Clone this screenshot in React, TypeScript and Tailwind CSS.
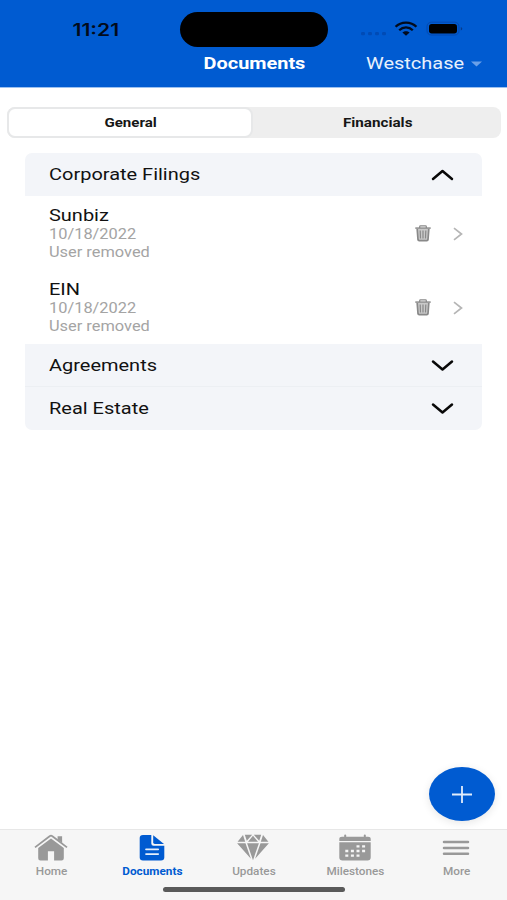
import type { ReactNode } from "react";

function Wide({ children, className = "" }: { children: ReactNode; className?: string }) {
  return <span className={`block whitespace-nowrap ${className}`}>{children}</span>;
}

function StatusBar() {
  return (
    <div className="flex h-[49px] items-start">
      <div className="flex w-[180px] justify-center pt-[18px] pl-3">
        <Wide className="scale-x-[1.24] font-[Inter,sans-serif] text-[17px] leading-[24px] font-semibold text-[#020b1c]">11:21</Wide>
      </div>
      <div className="mt-3 h-[35px] w-[148px] rounded-full bg-black" />
      <div className="flex pt-[21px] pl-8">
        <svg width="104" height="17" viewBox="0 0 104 17">
          <g fill="#004bb5">
            <rect x="1" y="11" width="4" height="3.2" rx="1.2" />
            <rect x="8" y="11" width="4" height="3.2" rx="1.2" />
            <rect x="15" y="11" width="4" height="3.2" rx="1.2" />
            <rect x="22" y="11" width="4" height="3.2" rx="1.2" />
          </g>
          <g fill="none" stroke="#020b1c" strokeWidth="2.3">
            <path d="M35.6 5.8C41 .2 51 .2 56.4 5.8" />
            <path d="M39.2 9.2c3.9-3.8 9.7-3.8 13.6 0" />
          </g>
          <path d="M42.4 11.6c2.1-1.9 5.1-1.9 7.2 0L46 14.7Z" fill="#020b1c" />
          <rect x="67" y="1.2" width="32" height="12.8" rx="4.2" fill="none" stroke="#0549ae" strokeWidth="1" />
          <rect x="69" y="3" width="28" height="9.4" rx="2.7" fill="#000" />
          <path d="M100.8 6v3.6c2-.6 2-3 0-3.6Z" fill="#063b8a" />
        </svg>
      </div>
    </div>
  );
}

function Header() {
  return (
    <header className="h-[88px] border-b border-[#9cc1f0] bg-[#005bd1]">
      <StatusBar />
      <div className="grid h-[30px] grid-cols-[180px_148px_179px] items-center text-white">
        <span />
        <div className="flex justify-center">
          <Wide className="scale-x-[1.17] text-[17px] font-bold">Documents</Wide>
        </div>
        <div className="flex items-center pl-[38px]">
          <div className="w-[105px]">
            <Wide className="origin-left scale-x-[1.175] text-[17px] text-[#e8f1fc]">Westchase</Wide>
          </div>
          <svg width="11" height="6" viewBox="0 0 11 6"><path d="M0 .5h11L5.5 5.5Z" fill="#6ba0e8" /></svg>
        </div>
      </div>
    </header>
  );
}

function SegmentedControl() {
  return (
    <div className="mx-[7px] mt-[19px] flex h-[31px] w-[494px] rounded-[8px] bg-[#eeeeee] text-[13px] font-bold text-[#161616]">
      <button className="flex w-[246px] items-center justify-center rounded-[8px] border-2 border-[#e7e8e9] bg-white">
        <Wide className="translate-x-px scale-x-[1.16]">General</Wide>
      </button>
      <button className="flex flex-1 items-center justify-center">
        <Wide className="translate-x-px scale-x-[1.17]">Financials</Wide>
      </button>
    </div>
  );
}

function SectionRow({ title, open = false, className = "" }: { title: string; open?: boolean; className?: string }) {
  return (
    <div className={`flex items-center justify-between bg-[#f3f5f9] pr-[28px] pl-6 ${className}`}>
      <Wide className="origin-left scale-x-[1.175] text-[17px] text-[#111]">{title}</Wide>
      <svg width="23" height="13" viewBox="0 0 23 13" fill="none" stroke="#080808" strokeWidth="2.5" strokeLinecap="round" strokeLinejoin="round">
        <path d={open ? "M2 11 11.5 3 21 11" : "M2 2.5 11.5 10.5 21 2.5"} />
      </svg>
    </div>
  );
}

function TrashIcon() {
  return (
    <svg width="16" height="17" viewBox="0 0 16 17" fill="none" stroke="#898989">
      <path d="M4.7 3V1.4q0-.6.8-.6h5q.8 0 .8.6V3" strokeWidth="1.2" />
      <path d="M.3 3.1h15.4" strokeWidth="1.5" />
      <path d="m2.2 4 .8 10.7q.1 1 1.2 1h7.6q1.1 0 1.2-1L13.8 4" fill="#c9c9c9" strokeWidth="1.7" />
      <path d="m5.2 5.5.3 8M8 5.5v8m2.8-8-.3 8" strokeWidth="1.2" />
    </svg>
  );
}

function FileRow({ name, date, note, className = "" }: { name: string; date: string; note: string; className?: string }) {
  return (
    <div className={`flex justify-between pr-[19px] pl-6 ${className}`}>
      <div className="pt-[10px]">
        <Wide className="origin-left scale-x-[1.175] text-[17px] leading-[19px] text-[#111]">{name}</Wide>
        <Wide className="origin-left scale-x-[1.17] text-[14px] leading-[18px] text-[#a4a4a4]">{date}</Wide>
        <Wide className="origin-left scale-x-[1.17] text-[14px] leading-[19px] text-[#a4a4a4]">{note}</Wide>
      </div>
      <div className="flex h-[75px] items-center gap-[22px]">
        <TrashIcon />
        <svg width="10" height="14" viewBox="0 0 10 14" fill="none" stroke="#b5b5b5" strokeWidth="1.7"><path d="m1 1.2 7.5 5.8L1 12.8" /></svg>
      </div>
    </div>
  );
}

function HomeIcon() {
  return (
    <svg width="34" height="27" viewBox="0 0 34 27" fill="#999">
      <path d="M23.6 2.2h4.5V9l-4.5-3.4Z" />
      <path d="M1 13.4 15.6 2.2q1.4-1 2.8 0L33 13.4" fill="none" stroke="#999" strokeWidth="1.8" />
      <path d="M4.2 14 17 4.5 29.8 14v10.3q0 2.2-2.3 2.2h-7.4v-9.3h-6.2v9.3H6.5q-2.3 0-2.3-2.2Z" />
    </svg>
  );
}

function DocumentIcon() {
  return (
    <svg width="26" height="27" viewBox="0 0 26 27">
      <path d="M4 1h8.3v8.5q0 2.2 2.3 2.2h10.7v11.8q0 3-3.3 3H4q-3.3 0-3.3-3V4Q.7 1 4 1Z" fill="#005bd1" />
      <path d="M14.2 1.3 25 10h-9.2q-1.6 0-1.6-1.4Z" fill="#005bd1" />
      <path d="M7 15.3h12.2M7 20.1h12.2" stroke="#e5effb" strokeWidth="1.7" strokeLinecap="round" />
    </svg>
  );
}

function GemIcon() {
  return (
    <svg width="34" height="27" viewBox="0 0 34 27" fill="#999">
      <path d="M7 1 1.6 7.8h7.6ZM8.8.7h7.4l-5.4 6.1ZM17.8.7h7.4l-2 6.1ZM27 1l5.4 6.8h-7.6ZM17 1.8l5 6H12ZM1.1 9.2h8.4l5.4 15.5ZM11.1 9.2h11.8L17 26.2ZM24.5 9.2h8.4L19.1 24.7Z" />
    </svg>
  );
}

function CalendarIcon() {
  return (
    <svg width="32" height="27" viewBox="0 0 32 27">
      <path d="M.3 7V5Q.3 2.8 3 2.8h2.2V1.2q0-.7 1-.7t1 .7v1.6h17.6V1.2q0-.7 1-.7t1 .7v1.6H29q2.7 0 2.7 2.2v2ZM.3 8.3h31.4v15.2q0 3-3.3 3H3.6q-3.3 0-3.3-3Z" fill="#999" />
      <path d="M17.5 11.2h3v2.4h-3zm5.6 0h3v2.4h-3zM6.3 15.8h3v2.4h-3zm5.6 0h3v2.4h-3zm5.6 0h3v2.4h-3zm5.6 0h3v2.4h-3zM6.3 20.4h3v2.4h-3zm5.6 0h3v2.4h-3zm5.6 0h3v2.4h-3z" fill="#f5f5f5" />
    </svg>
  );
}

function MenuIcon() {
  return (
    <svg width="28" height="27" viewBox="0 0 28 27" stroke="#999" strokeWidth="2.5" strokeLinecap="round">
      <path d="M2 8h24M2 14h24M2 19.8h24" />
    </svg>
  );
}

const tabs = [
  { label: "Home", icon: <HomeIcon /> },
  { label: "Documents", icon: <DocumentIcon /> },
  { label: "Updates", icon: <GemIcon /> },
  { label: "Milestones", icon: <CalendarIcon /> },
  { label: "More", icon: <MenuIcon /> },
];

function TabBar() {
  return (
    <nav className="h-[71px] border-t border-[#e7e7e7] bg-[#f6f6f6]">
      <div className="grid h-[56px] grid-cols-5 pt-[4px]">
        {tabs.map((tab, i) => (
          <div key={tab.label} className="flex flex-col items-center">
            {tab.icon}
            <Wide className={i === 1 ? "mt-[3px] translate-x-[0.5px] scale-x-[1.12] text-[10.5px] leading-[15px] font-bold text-[#005bd1]" : "mt-[3px] translate-x-[0.5px] scale-x-[1.12] text-[10.5px] leading-[15px] font-medium text-[#999]"}>{tab.label}</Wide>
          </div>
        ))}
      </div>
      <div className="mx-auto mt-[1px] h-[5px] w-[182px] rounded-full bg-[#5a5a5a]" />
    </nav>
  );
}

export default function App() {
  return (
    <div className="relative flex h-[900px] w-[507px] flex-col overflow-hidden bg-white font-[Roboto,sans-serif]">
      <Header />
      <SegmentedControl />
      <main className="mx-[25px] mt-[15px] flex-1">
        <SectionRow title="Corporate Filings" open className="h-[43px] rounded-t-[7px]" />
        <FileRow name="Sunbiz" date="10/18/2022" note="User removed" className="h-[74px]" />
        <FileRow name="EIN" date="10/18/2022" note="User removed" className="h-[74px]" />
        <SectionRow title="Agreements" className="h-[43px] border-b border-[#eceff3] pt-px" />
        <SectionRow title="Real Estate" className="h-[43px] rounded-b-[7px]" />
      </main>
      <TabBar />
      <button aria-label="Add" className="absolute top-[767px] left-[429px] flex h-[54px] w-[66px] items-center justify-center rounded-[50%] bg-[#005bd1] shadow-[0_2px_9px_rgba(0,0,0,0.1)]">
        <svg width="20" height="17" viewBox="0 0 20 17" stroke="#e2edfb" strokeWidth="1.8"><path d="M0 8.5h20M10 0v17" /></svg>
      </button>
    </div>
  );
}
